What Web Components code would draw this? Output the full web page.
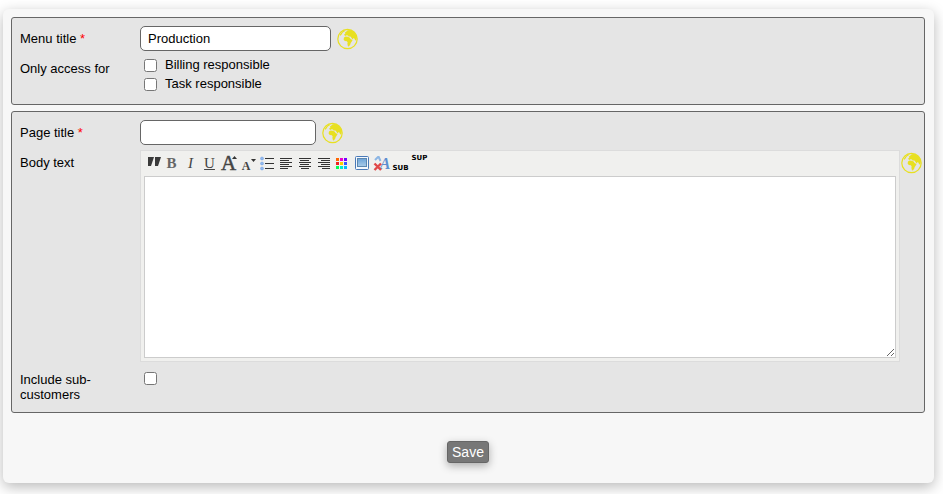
<!DOCTYPE html>
<html lang="en">
<head>
<meta charset="utf-8">
<title>Edit page</title>
<style>
  body {
    margin: 0;
    padding: 9px 9px 11px 3px;
    background: #fff;
    color: #000;
    font: 13px/15px "Liberation Sans", Arial, sans-serif;
  }
</style>
</head>
<body>
<form-card>
  <form-section>
    <text-row label="Menu title" value="Production" width="191px" required></text-row>
    <check-row label="Only access for" options="Billing responsible|Task responsible"></check-row>
  </form-section>
  <form-section>
    <text-row label="Page title" width="176px" required></text-row>
    <editor-row label="Body text"></editor-row>
    <toggle-row label="Include sub-customers"></toggle-row>
  </form-section>
  <save-button slot="actions">Save</save-button>
</form-card>

<script>
"use strict";

// Shared by every row: a label column and a control column.
const rowStyle = `
  :host {
    display: grid;
    grid-template-columns: 120px minmax(0, 1fr);
    align-items: start;
  }
  .label {
    padding-top: 5px;
  }
  .required {
    color: #f00;
  }
  .control {
    display: flex;
    align-items: center;
    gap: 6px;
  }
  input[type="checkbox"] {
    width: 13px;
    height: 13px;
    margin: 0;
    flex: none;
  }
`;

class BaseElement extends HTMLElement {
  constructor() {
    super();
    this.shadow = this.attachShadow({ mode: "open" });
  }

  connectedCallback() {
    const template = document.createElement("template");
    template.innerHTML = this.render();
    this.shadow.replaceChildren(template.content.cloneNode(true));
  }

  get label() {
    return this.getAttribute("label") || "";
  }
}

customElements.define(
  "form-card",
  class FormCard extends BaseElement {
    render() {
      return `
      <style>
      :host {
        display: block;
        padding: 8px 9px 20px 8px;
        border-radius: 6px;
        background: #f7f7f7;
        box-shadow: 0 4px 14px rgba(0, 0, 0, 0.28);
      }
      .sections {
        display: flex;
        flex-direction: column;
        gap: 6px;
      }
      .actions {
        display: flex;
        justify-content: center;
        padding-top: 28px;
      }
      </style>
      <div class="sections"><slot></slot></div>
      <div class="actions"><slot name="actions"></slot></div>`;
    }
  }
);

customElements.define(
  "form-section",
  class FormSection extends BaseElement {
    render() {
      return `
      <style>
      :host {
        display: flex;
        flex-direction: column;
        gap: 5px;
        padding: 8px 1px 10px 8px;
        border: 1px solid #666;
        border-radius: 3px;
        background: #e5e5e5;
      }
      </style>
      <slot></slot>`;
    }
  }
);

customElements.define(
  "globe-button",
  class GlobeButton extends BaseElement {
    render() {
      return `
      <style>
      :host {
        display: block;
        flex: none;
      }
      button {
        display: block;
        width: 22px;
        height: 22px;
        padding: 0;
        border: 0;
        background: none;
        cursor: pointer;
      }
      svg {
        display: block;
      }
      </style>
      <button type="button" aria-label="Translate">
        <svg width="22" height="22" viewBox="0 0 22 22">
          <circle cx="10.500" cy="11" r="9.700" fill="none" stroke="#e8e020" stroke-width="1.200"/>
          <g fill="#e8e020">
            <path d="M3 6.500 5 3.700 8.500 2 7.600 3.600 5.800 4.600 4.600 6.600 3 8z"/>
            <path d="M7 6.800 8.400 5.600 8 4.600 9.400 3.600 10.600 2.200 13.400 2 16.500 3.600 18.800 6.200 19.800 9.500 19.400 12 18.200 12.600 17.400 10.600 16.200 10.200 15.600 11.600 14.400 9.800 13.400 8.600 11.400 8.400 11 7.400 9.600 7.200 8.200 8z"/>
            <path d="M7 9.600 8.600 8.500 10.600 8.700 12.600 9.400 13.800 11.200 15.600 12 14.600 13.800 13.600 15.200 13.200 16.800 11.800 18.400 10.900 18.200 10.400 16 10.600 14.300 9.800 13.200 7.800 13 6.600 11.600z"/>
          </g>
        </svg>
      </button>`;
    }
  }
);

customElements.define(
  "text-row",
  class TextRow extends BaseElement {
    render() {
      const star = this.hasAttribute("required") ? ` <span class="required">*</span>` : "";
      return `
      <style>
      ${rowStyle}
      input {
        box-sizing: border-box;
        width: ${this.getAttribute("width")};
        height: 25px;
        padding: 0 7px;
        border: 1px solid #666;
        border-radius: 5px;
        background: #fff;
        color: inherit;
        font: inherit;
      }
      </style>
      <label class="label" for="field">${this.label}${star}</label>
      <div class="control">
        <input id="field" type="text" value="${this.getAttribute("value") || ""}">
        <globe-button></globe-button>
      </div>`;
    }
  }
);

customElements.define(
  "check-row",
  class CheckRow extends BaseElement {
    render() {
      const options = this.getAttribute("options").split("|");
      return `
      <style>
      ${rowStyle}
      .option {
        display: flex;
        align-items: center;
        gap: 8px;
        height: 19px;
        padding-left: 4px;
      }
      .text {
        padding-bottom: 2px;
      }
      </style>
      <div class="label" id="caption">${this.label}</div>
      <div role="group" aria-labelledby="caption">
        ${options.map((text) => `
          <label class="option"><input type="checkbox"><span class="text">${text}</span></label>`).join("")}
      </div>`;
    }
  }
);

customElements.define(
  "toggle-row",
  class ToggleRow extends BaseElement {
    render() {
      return `
      <style>
      ${rowStyle}
      .control {
        padding: 5px 0 0 4px;
      }
      </style>
      <label class="label" for="toggle">${this.label}</label>
      <div class="control"><input id="toggle" type="checkbox"></div>`;
    }
  }
);

// Six text lines of alternating length, aligned left, center or right.
const alignIcon = (side) => {
  const lines = [12, 9, 12, 9, 12, 8].map((width, i) => {
    const x = { left: 0, center: Math.floor((12 - width) / 2), right: 12 - width }[side];
    return `<rect x="${x + 3}" y="${i * 2 + 4}" width="${width}" height="1"/>`;
  });
  return `<svg width="19" height="19" fill="#333">${lines.join("")}</svg>`;
};

const swatches = ["#f60", "#e0c", "#70f", "#e22", "#fc0", "#35f", "#0f5", "#0ec", "#0bf"];

const tools = [
  ["Quote", `<svg width="19" height="19" fill="#3a3a3a"><path d="M4 3h6L7 12H4zM11 3h6L14 12H11z"/></svg>`],
  ["Bold", `<span class="serif bold">B</span>`],
  ["Italic", `<span class="serif italic">I</span>`],
  ["Underline", `<span class="serif underline">U</span>`],
  ["Larger text", `<span class="serif large">A</span><svg class="mark" width="5" height="3" fill="#333"><path d="M0 3 2.5 0 5 3z"/></svg>`],
  ["Smaller text", `<span class="serif small">A</span><svg class="mark low" width="5" height="3" fill="#333"><path d="M0 0 2.5 3 5 0z"/></svg>`],
  ["List", `<svg width="19" height="19"><g fill="#8fb8ee" stroke="#6b9be0" stroke-width=".5"><circle cx="4" cy="4.5" r="1.5"/><circle cx="4" cy="9.5" r="1.5"/><circle cx="4" cy="14.5" r="1.5"/></g><g fill="#333"><rect x="7" y="4" width="9" height="1"/><rect x="7" y="9" width="9" height="1"/><rect x="7" y="14" width="9" height="1"/></g></svg>`],
  ["Align left", alignIcon("left")],
  ["Align center", alignIcon("center")],
  ["Align right", alignIcon("right")],
  ["Text color", `<svg width="19" height="19">${swatches.map((fill, i) => `<rect x="${2 + (i % 3) * 4}" y="${4 + Math.floor(i / 3) * 4}" width="3" height="3" fill="${fill}"/>`).join("")}</svg>`],
  ["Picture", `<svg width="19" height="19"><defs><linearGradient id="sky" x2="0" y2="1"><stop stop-color="#6ba3d8"/><stop offset="1" stop-color="#a9cbe8"/></linearGradient></defs><rect x="2.5" y="2.5" width="13" height="13" rx="1" fill="#f4f8fd" stroke="#4a7ab8"/><rect x="4.5" y="4.5" width="9" height="8" fill="url(#sky)" stroke="#5b87b0"/></svg>`],
  ["Clear formatting", `<span class="serif clear">A</span><svg class="cross" width="11" height="15"><path d="M2 4 5.5 0.500 7.500 5" fill="none" stroke="#8db6e4" stroke-width="2"/><path d="M1.500 7.500 8 14M8 7.500 1.500 14" stroke="#e04848" stroke-width="2.400"/></svg>`],
  ["Subscript", `<span class="tiny sub">SUB</span>`],
  ["Superscript", `<span class="tiny sup">SUP</span>`],
];

customElements.define(
  "editor-toolbar",
  class EditorToolbar extends BaseElement {
    render() {
      return `
      <style>
      :host {
        display: flex;
        height: 25px;
        align-items: center;
      }
      button {
        position: relative;
        display: flex;
        align-items: center;
        justify-content: center;
        width: 19px;
        height: 19px;
        padding: 0;
        border: 0;
        background: none;
        color: #444;
        flex: none;
        cursor: pointer;
      }
      svg {
        display: block;
        flex: none;
      }
      .serif {
        font: 15px/19px "Liberation Serif", serif;
        padding-right: 2px;
      }
      .bold {
        font-weight: bold;
        color: #666;
      }
      .italic {
        font-style: italic;
      }
      .underline {
        text-decoration: underline;
      }
      .large {
        font-size: 21px;
        -webkit-text-stroke: 0.5px #444;
      }
      .small {
        font-size: 12px;
        font-weight: bold;
        padding: 5px 5px 0 0;
      }
      .clear {
        font-size: 16px;
        font-style: italic;
        font-weight: bold;
        color: #5c8fd0;
        padding: 0 0 0 7px;
      }
      .mark {
        position: absolute;
        top: 2px;
        right: 2px;
      }
      .low {
        top: 5px;
      }
      .cross {
        position: absolute;
        top: 2px;
        left: 1px;
      }
      .tiny {
        font: bold 7px/9px "DejaVu Sans", sans-serif;
        color: #000;
      }
      .sub {
        align-self: flex-end;
      }
      .sup {
        align-self: flex-start;
      }
      </style>
      ${tools.map(([name, icon]) => `<button type="button" title="${name}" aria-label="${name}">${icon}</button>`).join("")}`;
    }
  }
);

customElements.define(
  "editor-row",
  class EditorRow extends BaseElement {
    render() {
      return `
      <style>
      ${rowStyle}
      .control {
        align-items: flex-start;
        gap: 1px;
      }
      .editor {
        flex: 1;
        min-width: 0;
        padding: 0 3px 3px;
        border: 1px solid #dcdcdc;
        background: #f0f0ee;
      }
      textarea {
        display: block;
        box-sizing: border-box;
        width: 100%;
        height: 182px;
        margin: 0;
        padding: 4px;
        border: 1px solid #ccc;
        background: #fff;
        color: inherit;
        font: inherit;
      }
      globe-button {
        padding-top: 2px;
      }
      </style>
      <label class="label" for="body">${this.label}</label>
      <div class="control">
        <div class="editor">
          <editor-toolbar></editor-toolbar>
          <textarea id="body"></textarea>
        </div>
        <globe-button></globe-button>
      </div>`;
    }
  }
);

customElements.define(
  "save-button",
  class SaveButton extends BaseElement {
    render() {
      return `
      <style>
      :host {
        display: block;
      }
      button {
        display: block;
        height: 22px;
        padding: 0 4px;
        border: 1px solid #666;
        border-radius: 3px;
        background: #777;
        color: #fff;
        font: 14px/20px "Liberation Sans", Arial, sans-serif;
        box-shadow: 0 3px 8px rgba(0, 0, 0, 0.3);
        cursor: pointer;
      }
      </style>
      <button type="submit"><slot></slot></button>`;
    }
  }
);
</script>
</body>
</html>
